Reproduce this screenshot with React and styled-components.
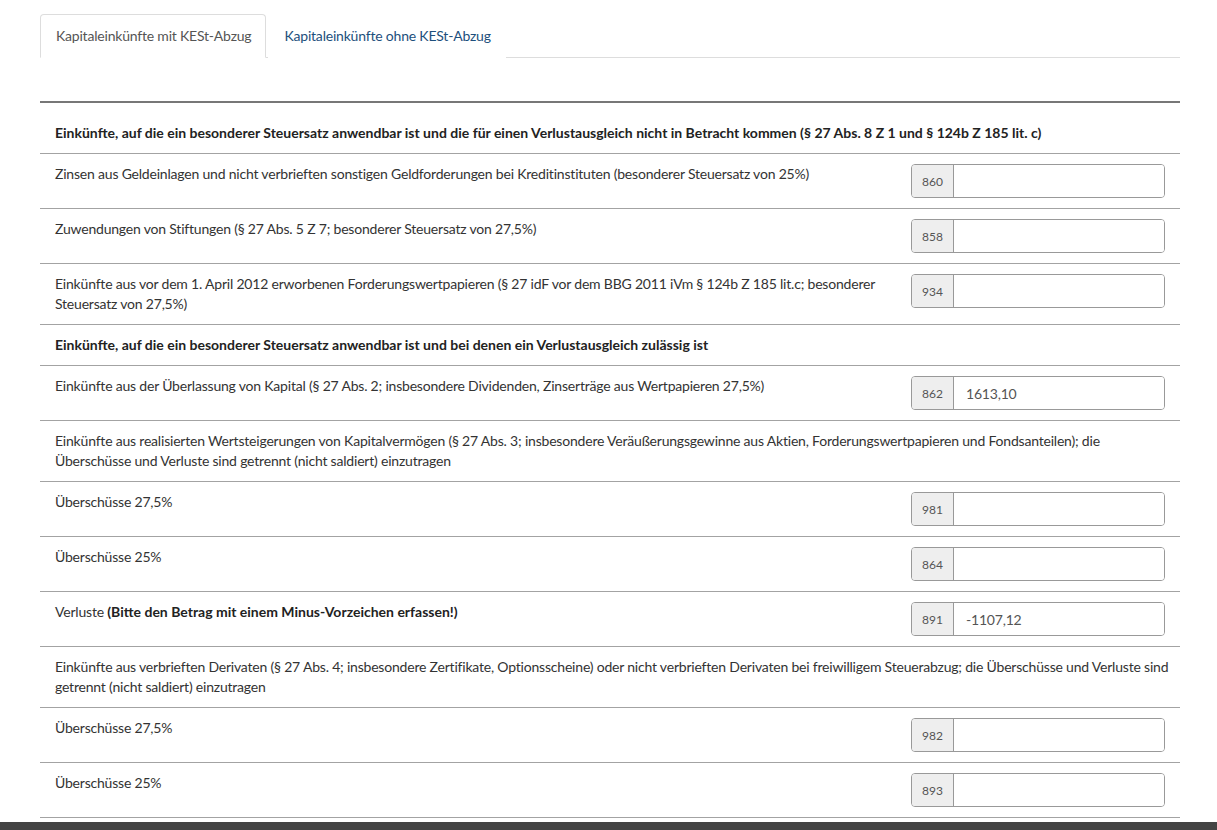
import React from "react";
import styled, { createGlobalStyle } from "styled-components";

const GlobalStyle = createGlobalStyle`
  html, body {
    margin: 0;
    padding: 0;
    background: #fff;
  }
  body {
    font-family: Lato, "Liberation Sans", sans-serif;
    font-size: 14px;
    line-height: 20px;
    letter-spacing: -0.2px;
    color: #333;
  }
`;

const rows = [
  {
    type: "heading",
    first: true,
    text: "Einkünfte, auf die ein besonderer Steuersatz anwendbar ist und die für einen Verlustausgleich nicht in Betracht kommen (§ 27 Abs. 8 Z 1 und § 124b Z 185 lit. c)"
  },
  {
    type: "field",
    code: "860",
    text: "Zinsen aus Geldeinlagen und nicht verbrieften sonstigen Geldforderungen bei Kreditinstituten (besonderer Steuersatz von 25%)"
  },
  {
    type: "field",
    code: "858",
    text: "Zuwendungen von Stiftungen (§ 27 Abs. 5 Z 7; besonderer Steuersatz von 27,5%)"
  },
  {
    type: "field",
    code: "934",
    text: "Einkünfte aus vor dem 1. April 2012 erworbenen Forderungswertpapieren (§ 27 idF vor dem BBG 2011 iVm § 124b Z 185 lit.c; besonderer Steuersatz von 27,5%)"
  },
  {
    type: "heading",
    text: "Einkünfte, auf die ein besonderer Steuersatz anwendbar ist und bei denen ein Verlustausgleich zulässig ist"
  },
  {
    type: "field",
    code: "862",
    value: "1613,10",
    text: "Einkünfte aus der Überlassung von Kapital (§ 27 Abs. 2; insbesondere Dividenden, Zinserträge aus Wertpapieren 27,5%)"
  },
  {
    type: "note",
    text: "Einkünfte aus realisierten Wertsteigerungen von Kapitalvermögen (§ 27 Abs. 3; insbesondere Veräußerungsgewinne aus Aktien, Forderungswertpapieren und Fondsanteilen); die Überschüsse und Verluste sind getrennt (nicht saldiert) einzutragen"
  },
  { type: "field", code: "981", text: "Überschüsse 27,5%" },
  { type: "field", code: "864", text: "Überschüsse 25%" },
  {
    type: "field",
    code: "891",
    value: "-1107,12",
    text: "Verluste",
    hint: "(Bitte den Betrag mit einem Minus-Vorzeichen erfassen!)"
  },
  {
    type: "note",
    text: "Einkünfte aus verbrieften Derivaten (§ 27 Abs. 4; insbesondere Zertifikate, Optionsscheine) oder nicht verbrieften Derivaten bei freiwilligem Steuerabzug; die Überschüsse und Verluste sind getrennt (nicht saldiert) einzutragen"
  },
  { type: "field", code: "982", text: "Überschüsse 27,5%" },
  { type: "field", code: "893", text: "Überschüsse 25%" }
];

const App = () => {
  return (
    <>
      <GlobalStyle />
      <Page>
        <Tabs>
          <Tab active>Kapitaleinkünfte mit KESt-Abzug</Tab>
          <Tab>Kapitaleinkünfte ohne KESt-Abzug</Tab>
        </Tabs>
        <Table>
          {rows.map((row, i) => {
            if (row.type === "heading") {
              return (
                <Row key={i} first={row.first}>
                  <HeadingCell>{row.text}</HeadingCell>
                </Row>
              );
            }
            if (row.type === "note") {
              return (
                <Row key={i}>
                  <NoteCell>{row.text}</NoteCell>
                </Row>
              );
            }
            return (
              <Row key={i}>
                <LabelCell>
                  {row.text}
                  {row.hint && <Hint> {row.hint}</Hint>}
                </LabelCell>
                <InputCell>
                  <InputGroup>
                    <Addon>{row.code}</Addon>
                    <Input defaultValue={row.value || ""} />
                  </InputGroup>
                </InputCell>
              </Row>
            );
          })}
        </Table>
      </Page>
      <Footer />
    </>
  );
};

const Page = styled.div`
  width: 1140px;
  margin: 0 0 0 40px;
  padding-top: 14px;
`;

const Tabs = styled.div`
  display: flex;
  border-bottom: 1px solid #ddd;
  height: 43px;
`;

const Tab = styled.div`
  height: 44px;
  box-sizing: border-box;
  padding: 11px 14px 0 15px;
  margin-right: 2px;
  margin-bottom: -1px;
  border: 1px solid ${props => (props.active ? "#ddd" : "transparent")};
  border-bottom-color: ${props => (props.active ? "#fff" : "transparent")};
  border-radius: 4px 4px 0 0;
  background: #fff;
  color: ${props => (props.active ? "#555" : "#1d4f7c")};
  font-size: 14px;
`;

const Table = styled.div`
  margin-top: 43px;
  border-top: 2px solid #777;
`;

const Row = styled.div`
  display: grid;
  grid-template-columns: 1fr 284px;
  border-bottom: 1px solid #a3a3a3;
  padding-top: ${props => (props.first ? "10px" : "0")};
`;

const CellBase = styled.div`
  padding: 10px 15px;
`;

const HeadingCell = styled(CellBase)`
  grid-column: 1 / -1;
  font-weight: 700;
  letter-spacing: 0;
  color: #222;
`;

const NoteCell = styled(CellBase)`
  grid-column: 1 / -1;
  padding-right: 4px;
`;

const LabelCell = styled(CellBase)``;

const Hint = styled.span`
  font-weight: 700;
  letter-spacing: 0;
  color: #222;
`;

const InputCell = styled(CellBase)``;

const InputGroup = styled.div`
  display: flex;
  height: 34px;
  box-sizing: border-box;
  border: 1px solid #999;
  border-radius: 4px;
  overflow: hidden;
`;

const Addon = styled.span`
  width: 42px;
  flex: none;
  display: flex;
  align-items: center;
  justify-content: center;
  padding-top: 2px;
  box-sizing: border-box;
  background: #eee;
  border-right: 1px solid #999;
  color: #555;
  font-size: 12px;
  letter-spacing: 0;
`;

const Input = styled.input`
  flex: 1;
  min-width: 0;
  border: none;
  outline: none;
  padding: 0 12px;
  font-family: inherit;
  font-size: 14px;
  letter-spacing: -0.2px;
  color: #555;
  background: #fff;
`;

const Footer = styled.div`
  margin-top: 4px;
  height: 40px;
  background: #444;
`;

export default App;
